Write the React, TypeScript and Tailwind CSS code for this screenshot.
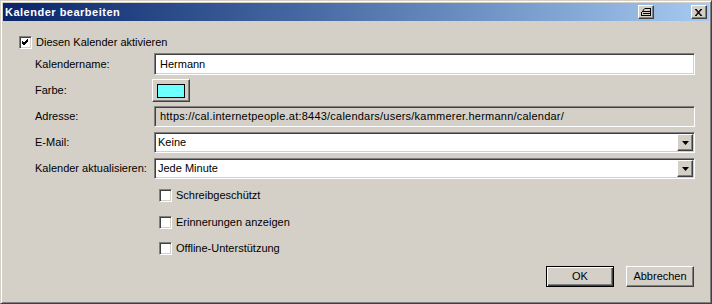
import React from 'react';

const sunken =
  'border border-t-[#808080] border-l-[#808080] border-b-white border-r-white shadow-[inset_1px_1px_#404040,inset_-1px_-1px_#d4d0c8]';
const raised =
  'border border-t-white border-l-white border-b-[#404040] border-r-[#404040] shadow-[inset_-1px_-1px_#808080,inset_1px_1px_#d4d0c8]';

function CheckBox({ checked, label, className }: { checked?: boolean; label: string; className?: string }) {
  return (
    <div className={`flex items-center h-[13px] ${className ?? ''}`}>
      <span className={`w-[13px] h-[13px] bg-white flex items-center justify-center ${sunken}`}>
        {checked && (
          <svg width="7" height="7" viewBox="0 0 7 7">
            <path d="M0 2 L2 4 L6 0 M0 3 L2 5 L6 1 M0 4 L2 6 L6 2" stroke="#000" strokeWidth="1" fill="none" shapeRendering="crispEdges" />
          </svg>
        )}
      </span>
      <span className="ml-[4px]">{label}</span>
    </div>
  );
}

function Select({ value, className }: { value: string; className?: string }) {
  return (
    <div className={`h-[21px] bg-white flex items-center ${sunken} ${className ?? ''}`}>
      <span className="flex-1 pl-[3px]">{value}</span>
      <span className={`w-[16px] h-[17px] mr-[1px] bg-[#d4d0c8] flex items-center justify-center ${raised}`}>
        <svg width="7" height="4" viewBox="0 0 7 4">
          <path d="M0 0 H7 L3.5 4 Z" fill="#000" />
        </svg>
      </span>
    </div>
  );
}

export default function App() {
  return (
    <div className="w-[712px] h-[304px] bg-[#d4d0c8] text-[11px] text-black font-['Liberation_Sans',Arial,sans-serif] border border-t-[#d4d0c8] border-l-[#d4d0c8] border-b-[#404040] border-r-[#404040] shadow-[inset_1px_1px_white,inset_-1px_-1px_#808080] p-[2px] flex flex-col">
      {/* title bar */}
      <div className="h-[18px] bg-gradient-to-r from-[#0a246a] to-[#a6caf0] flex items-center pl-[2px] pr-[2px]">
        <span className="flex-1 text-white font-bold tracking-[0.5px]">Kalender bearbeiten</span>
        <span className={`w-[16px] h-[14px] bg-[#d4d0c8] flex items-center justify-center ${raised}`}>
          <svg width="11" height="8" viewBox="0 0 11 8">
            <path d="M3.5 0.5 H9.5 V3.5 M1.5 3.5 H9.5 V7.5 H0.5 V4.5 Z M1.5 5.5 H8.5" stroke="#000" strokeWidth="1" fill="none" shapeRendering="crispEdges" />
            <path d="M3.5 0.5 L1.5 3.5" stroke="#000" strokeWidth="1" />
          </svg>
        </span>
        <span className={`ml-[37px] w-[16px] h-[14px] bg-[#d4d0c8] flex items-center justify-center ${raised}`}>
          <svg width="8" height="7" viewBox="0 0 8 7">
            <path d="M0 0 L6 7 M1 0 L7 7 M6 0 L0 7 M7 0 L1 7" stroke="#000" strokeWidth="1" fill="none" />
          </svg>
        </span>
      </div>

      {/* body */}
      <div className="flex-1 flex flex-col pr-[14px]">
        <CheckBox checked label="Diesen Kalender aktivieren" className="mt-[15px] ml-[16px]" />

        <div className="grid grid-cols-[119px_1fr] items-center mt-[4px] pl-[32px]">
          <span>Kalendername:</span>
          <div className={`h-[22px] bg-white flex items-center pl-[5px] ${sunken}`}>Hermann</div>
        </div>

        <div className="grid grid-cols-[119px_1fr] items-center mt-[4px] pl-[32px]">
          <span>Farbe:</span>
          <div className={`-ml-[2px] w-[38px] h-[23px] flex items-center justify-center ${raised}`}>
            <span className="w-[28px] h-[14px] bg-[#6effff] border border-black" />
          </div>
        </div>

        <div className="grid grid-cols-[119px_1fr] items-center mt-[4px] pl-[32px]">
          <span>Adresse:</span>
          <div className={`h-[21px] bg-[#d4d0c8] flex items-center pl-[5px] tracking-[0.22px] ${sunken}`}>
            https://cal.internetpeople.at:8443/calendars/users/kammerer.hermann/calendar/
          </div>
        </div>

        <div className="grid grid-cols-[119px_1fr] items-center mt-[5px] pl-[32px]">
          <span>E-Mail:</span>
          <Select value="Keine" />
        </div>

        <div className="grid grid-cols-[119px_1fr] items-center mt-[5px] pl-[32px]">
          <span>Kalender aktualisieren:</span>
          <Select value="Jede Minute" />
        </div>

        <div className="pl-[156px] flex flex-col">
          <CheckBox label="Schreibgeschützt" className="mt-[10px]" />
          <CheckBox label="Erinnerungen anzeigen" className="mt-[14px]" />
          <CheckBox label="Offline-Unterstützung" className="mt-[13px]" />
        </div>

        <div className="flex justify-end gap-[12px] mt-[11px] pr-[1px]">
          <button className="w-[68px] h-[21px] border border-black bg-[#d4d0c8] shadow-[inset_1px_1px_white,inset_-1px_-1px_#404040,inset_-2px_-2px_#808080] flex items-center justify-center">
            OK
          </button>
          <button className={`w-[68px] h-[21px] bg-[#d4d0c8] flex items-center justify-center ${raised}`}>Abbrechen</button>
        </div>
      </div>
    </div>
  );
}
